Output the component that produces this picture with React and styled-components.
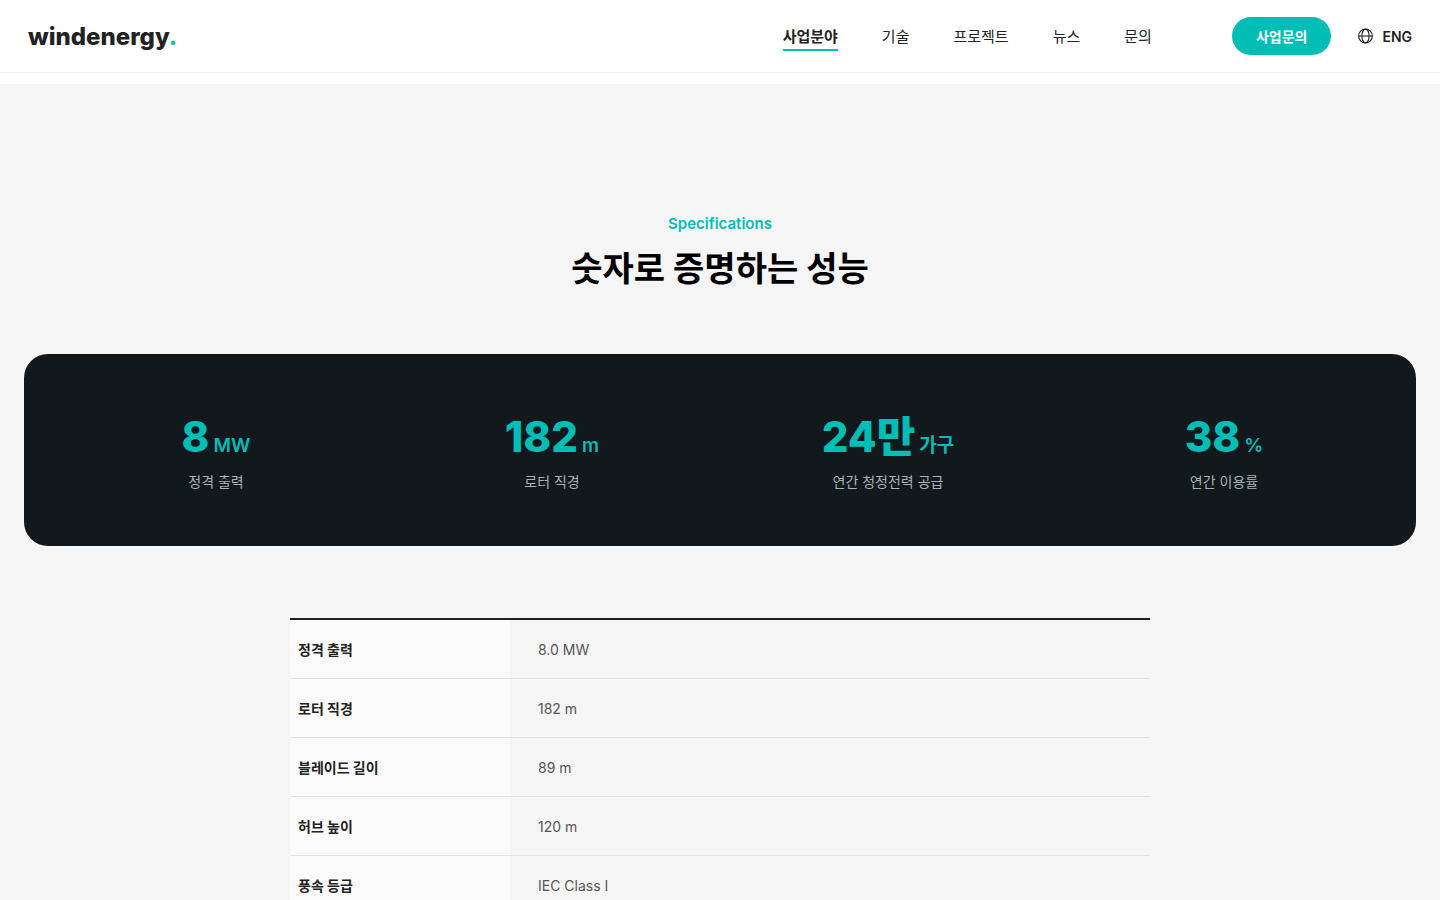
import React from 'react';
import styled, { createGlobalStyle } from 'styled-components';

const colors = {
  teal: '#00bdb6',
  ink: '#222222',
  dark: '#11191c'
};

const GlobalStyle = createGlobalStyle`
  * {
    box-sizing: border-box;
  }
  body {
    margin: 0;
    background: #ffffff;
    color: ${colors.ink};
    font-family: Inter, 'Noto Sans CJK KR', sans-serif;
    font-size: 15px;
    line-height: 24px;
    -webkit-font-smoothing: antialiased;
  }
  a {
    color: inherit;
    text-decoration: none;
  }
`;

const StyledHeader = styled.header`
  display: flex;
  align-items: center;
  height: 73px;
  padding: 0 28px;
  margin-bottom: 11px;
  background: #ffffff;
  border-bottom: 1px solid #eeeeee;
`;

const StyledLogo = styled.a`
  padding-top: 2px;
  margin-right: auto;
  font-size: 24px;
  font-weight: 800;
  line-height: 32px;
  & span {
    color: ${colors.teal};
  }
`;

const StyledNav = styled.nav`
  display: flex;
  gap: 44px;
  margin-right: 80px;
`;

const StyledNavLink = styled.a`
  padding-top: 4px;
  font-weight: ${({ $active }) => ($active ? 700 : 400)};
  border-bottom: 2px solid
    ${({ $active }) => ($active ? colors.teal : 'transparent')};
`;

const StyledInquiryButton = styled.button`
  height: 38px;
  padding: 2px 24px 0;
  margin-right: 27px;
  border: 0;
  border-radius: 19px;
  background: ${colors.teal};
  color: #ffffff;
  font-family: inherit;
  font-size: 14px;
  font-weight: 700;
  line-height: 24px;
  cursor: pointer;
`;

const StyledLanguage = styled.a`
  display: flex;
  align-items: center;
  gap: 9px;
  font-size: 14px;
  font-weight: 600;
  & span {
    padding-top: 2px;
  }
`;

const StyledSection = styled.section`
  padding: 128px 24px 120px;
  background: #f5f5f5;
`;

const StyledEyebrow = styled.p`
  margin: 0 0 8px;
  color: ${colors.teal};
  font-size: 15px;
  font-weight: 600;
  line-height: 24px;
  text-align: center;
`;

const StyledTitle = styled.h2`
  margin: 0 0 60px;
  color: #000000;
  font-size: 34px;
  font-weight: 700;
  line-height: 50px;
  text-align: center;
`;

const StyledStats = styled.dl`
  display: grid;
  grid-template-columns: repeat(4, 1fr);
  margin: 0 0 72px;
  padding: 56px 24px 52px;
  border-radius: 24px;
  background: ${colors.dark};
`;

const StyledStat = styled.div`
  display: flex;
  flex-direction: column-reverse;
  gap: 6px;
  text-align: center;
`;

const StyledStatValue = styled.dd`
  margin: 0;
  color: ${colors.teal};
  font-size: 42px;
  font-weight: 800;
  line-height: 54px;
`;

const StyledUnit = styled.span`
  margin-left: 4px;
  font-size: 19px;
  font-weight: 600;
  line-height: 24px;
`;

const StyledStatLabel = styled.dt`
  color: #a9b2b8;
  font-size: 14px;
`;

const StyledTable = styled.table`
  width: 100%;
  max-width: 860px;
  margin: 0 auto;
  border-collapse: separate;
  border-spacing: 0;
  border-top: 2px solid ${colors.ink};
  font-size: 14px;
  text-align: left;
  & th,
  & td {
    border-bottom: 1px solid #e2e2e2;
  }
`;

const StyledName = styled.th`
  width: 220px;
  padding: 18px 8px 16px;
  background: #fafafa;
  font-weight: 700;
`;

const StyledValue = styled.td`
  padding: 18px 28px 16px;
  color: #555555;
`;

const navItems = ['사업분야', '기술', '프로젝트', '뉴스', '문의'];

const stats = [
  { value: '8', unit: 'MW', label: '정격 출력' },
  { value: '182', unit: 'm', label: '로터 직경' },
  { value: '24만', unit: '가구', label: '연간 청정전력 공급' },
  { value: '38', unit: '%', label: '연간 이용률' }
];

const specs = [
  ['정격 출력', '8.0 MW'],
  ['로터 직경', '182 m'],
  ['블레이드 길이', '89 m'],
  ['허브 높이', '120 m'],
  ['풍속 등급', 'IEC Class I']
];

const GlobeIcon = () => (
  <svg
    width="15"
    height="16"
    viewBox="0 0 15 16"
    fill="none"
    stroke="currentColor"
    strokeWidth="1.1"
    aria-hidden="true"
  >
    <circle cx="7.5" cy="8" r="6.9" />
    <ellipse cx="7.5" cy="8" rx="3.6" ry="6.9" />
    <path d="M.6 8h13.8" />
  </svg>
);

const App = () => (
  <>
    <GlobalStyle />
    <StyledHeader>
      <StyledLogo href="#">
        windenergy<span>.</span>
      </StyledLogo>
      <StyledNav>
        {navItems.map((item, i) => (
          <StyledNavLink key={item} href="#" $active={i === 0}>
            {item}
          </StyledNavLink>
        ))}
      </StyledNav>
      <StyledInquiryButton type="button">사업문의</StyledInquiryButton>
      <StyledLanguage href="#">
        <GlobeIcon />
        <span>ENG</span>
      </StyledLanguage>
    </StyledHeader>
    <StyledSection>
      <StyledEyebrow>Specifications</StyledEyebrow>
      <StyledTitle>숫자로 증명하는 성능</StyledTitle>
      <StyledStats>
        {stats.map(({ value, unit, label }) => (
          <StyledStat key={label}>
            <StyledStatLabel>{label}</StyledStatLabel>
            <StyledStatValue>
              {value}
              <StyledUnit>{unit}</StyledUnit>
            </StyledStatValue>
          </StyledStat>
        ))}
      </StyledStats>
      <StyledTable>
        <tbody>
          {specs.map(([name, value]) => (
            <tr key={name}>
              <StyledName scope="row">{name}</StyledName>
              <StyledValue>{value}</StyledValue>
            </tr>
          ))}
        </tbody>
      </StyledTable>
    </StyledSection>
  </>
);

export default App;
